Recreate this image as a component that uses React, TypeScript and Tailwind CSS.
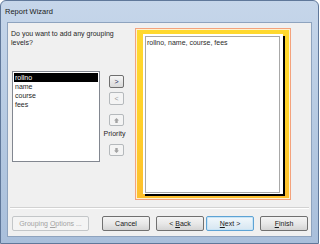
import React from "react";

const items = ["rollno", "name", "course", "fees"];

const SmallBtn = ({ children, active }: { children: React.ReactNode; active?: boolean }) => (
  <div
    className={`w-[15px] flex items-center justify-center rounded-[2px] border ${
      active
        ? "h-[13px] border-[#6f6f6f] bg-gradient-to-b from-[#f6f6f6] to-[#d9d9d9] text-[#1c2a5a]"
        : "h-[13px] border-[#b5b9bc] bg-[#f4f4f4] text-[#9a9a9a]"
    }`}
  >
    {children}
  </div>
);

const Arrow = ({ down }: { down?: boolean }) => (
  <svg width="5" height="5" viewBox="0 0 5 5" className={down ? "rotate-180" : ""}>
    <path d="M2.5 0 L5 2.5 L3.7 2.5 L3.7 5 L1.3 5 L1.3 2.5 L0 2.5 Z" fill="#a3a3a3" />
  </svg>
);

const WinBtn = ({
  children,
  w,
  disabled,
  focused,
}: {
  children: React.ReactNode;
  w: string;
  disabled?: boolean;
  focused?: boolean;
}) => (
  <div
    className={`${w} h-[15px] flex items-center justify-center rounded-[2px] border ${
      disabled
        ? "border-[#c3c6c8] bg-[#f4f4f4] text-[#a3a3a3]"
        : focused
        ? "border-[#5ea3d4] bg-gradient-to-b from-[#f2f8fc] to-[#d6e6f1] shadow-[inset_0_0_0_1px_#c9e4f6] text-[#1a1a1a]"
        : "border-[#707070] bg-gradient-to-b from-[#f4f4f4] via-[#e8e8e8] to-[#d4d4d4] text-[#1a1a1a]"
    }`}
  >
    {children}
  </div>
);

export default function App() {
  return (
    <div className="w-[320px] h-[244px] bg-white font-['Liberation_Sans',Arial,sans-serif] text-[7px] leading-[9px] text-black">
      <div className="w-[319px] h-[244px] flex flex-col rounded-t-[6px] border border-[#60789a] bg-gradient-to-b from-[#c6d6ea] via-[#b6cae2] to-[#a9bfdb]">
        {/* Title bar */}
        <div className="h-[21px] flex items-center pl-[4px] text-[7.5px] text-[#1b1b1b]">Report Wizard</div>

        {/* Client area */}
        <div className="flex-1 mx-[6px] mb-[6px] border border-[#8ea3be] bg-[#f0f0f0] flex flex-col">
          <div className="flex pt-[5px]">
            {/* Left column */}
            <div className="w-[127px] flex flex-col">
              <div className="pl-[3px] pt-[1px] w-[118px] text-[#1e1e1e]">Do you want to add any grouping levels?</div>
              <div className="flex mt-[24px] ml-[4px]">
                <div className="w-[88px] h-[91px] border border-[#828790] bg-white p-[1px]">
                  {items.map((it, i) => (
                    <div
                      key={it}
                      className={`h-[9px] pl-[1px] leading-[9px] ${i === 0 ? "bg-black text-white" : "text-[#1e1e1e]"}`}
                    >
                      {it}
                    </div>
                  ))}
                </div>
                <div className="ml-[9px] mt-[4px] flex flex-col items-center w-[15px]">
                  <SmallBtn active>&gt;</SmallBtn>
                  <div className="mt-[4px]">
                    <SmallBtn>&lt;</SmallBtn>
                  </div>
                  <div className="mt-[9px] w-[15px] h-[12px] flex items-center justify-center rounded-[2px] border border-[#b5b9bc] bg-[#f4f4f4]">
                    <Arrow />
                  </div>
                  <div className="mt-[3px] h-[9px] w-[30px] text-center text-[#1e1e1e] -ml-[4px]">Priority</div>
                  <div className="mt-[6px] w-[15px] h-[12px] flex items-center justify-center rounded-[2px] border border-[#b5b9bc] bg-[#f4f4f4]">
                    <Arrow down />
                  </div>
                </div>
              </div>
            </div>

            {/* Preview */}
            <div className="w-[156px] h-[172px] border border-[#f4a27c] bg-[#fff1cf] p-[1px]">
              <div className="w-full h-full bg-gradient-to-b from-[#ffd92e] via-[#ffd12a] to-[#fdbf2d] pl-[6px] pt-[4px] pr-[4px] pb-[2px]">
                <div className="w-[140px] h-[160px] bg-white shadow-[2px_2px_0_#000] pl-[2px] pt-[2px] pr-[3px] pb-[1px]">
                  <div className="w-full h-full border border-[#a8a8a8] bg-white pl-[1px] pt-[1px] text-[#2a2a2a]">
                    rollno, name, course, fees
                  </div>
                </div>
              </div>
            </div>
          </div>

          {/* Separator */}
          <div className="mt-[7px] mx-[2px] h-[1px] bg-[#d2d2d2] shadow-[0_1px_0_#ffffff]" />

          {/* Buttons */}
          <div className="flex mt-[8px] ml-[4px]">
            <WinBtn w="w-[77px]" disabled>
              <span>
                Grouping <span className="underline">O</span>ptions ...
              </span>
            </WinBtn>
            <div className="ml-[13px]">
              <WinBtn w="w-[48px]">Cancel</WinBtn>
            </div>
            <div className="ml-[6px]">
              <WinBtn w="w-[48px]">
                <span>
                  &lt; <span className="underline">B</span>ack
                </span>
              </WinBtn>
            </div>
            <div className="ml-[2px]">
              <WinBtn w="w-[48px]" focused>
                <span>
                  <span className="underline">N</span>ext &gt;
                </span>
              </WinBtn>
            </div>
            <div className="ml-[6px]">
              <WinBtn w="w-[48px]">
                <span>
                  <span className="underline">F</span>inish
                </span>
              </WinBtn>
            </div>
          </div>
        </div>
      </div>
    </div>
  );
}
